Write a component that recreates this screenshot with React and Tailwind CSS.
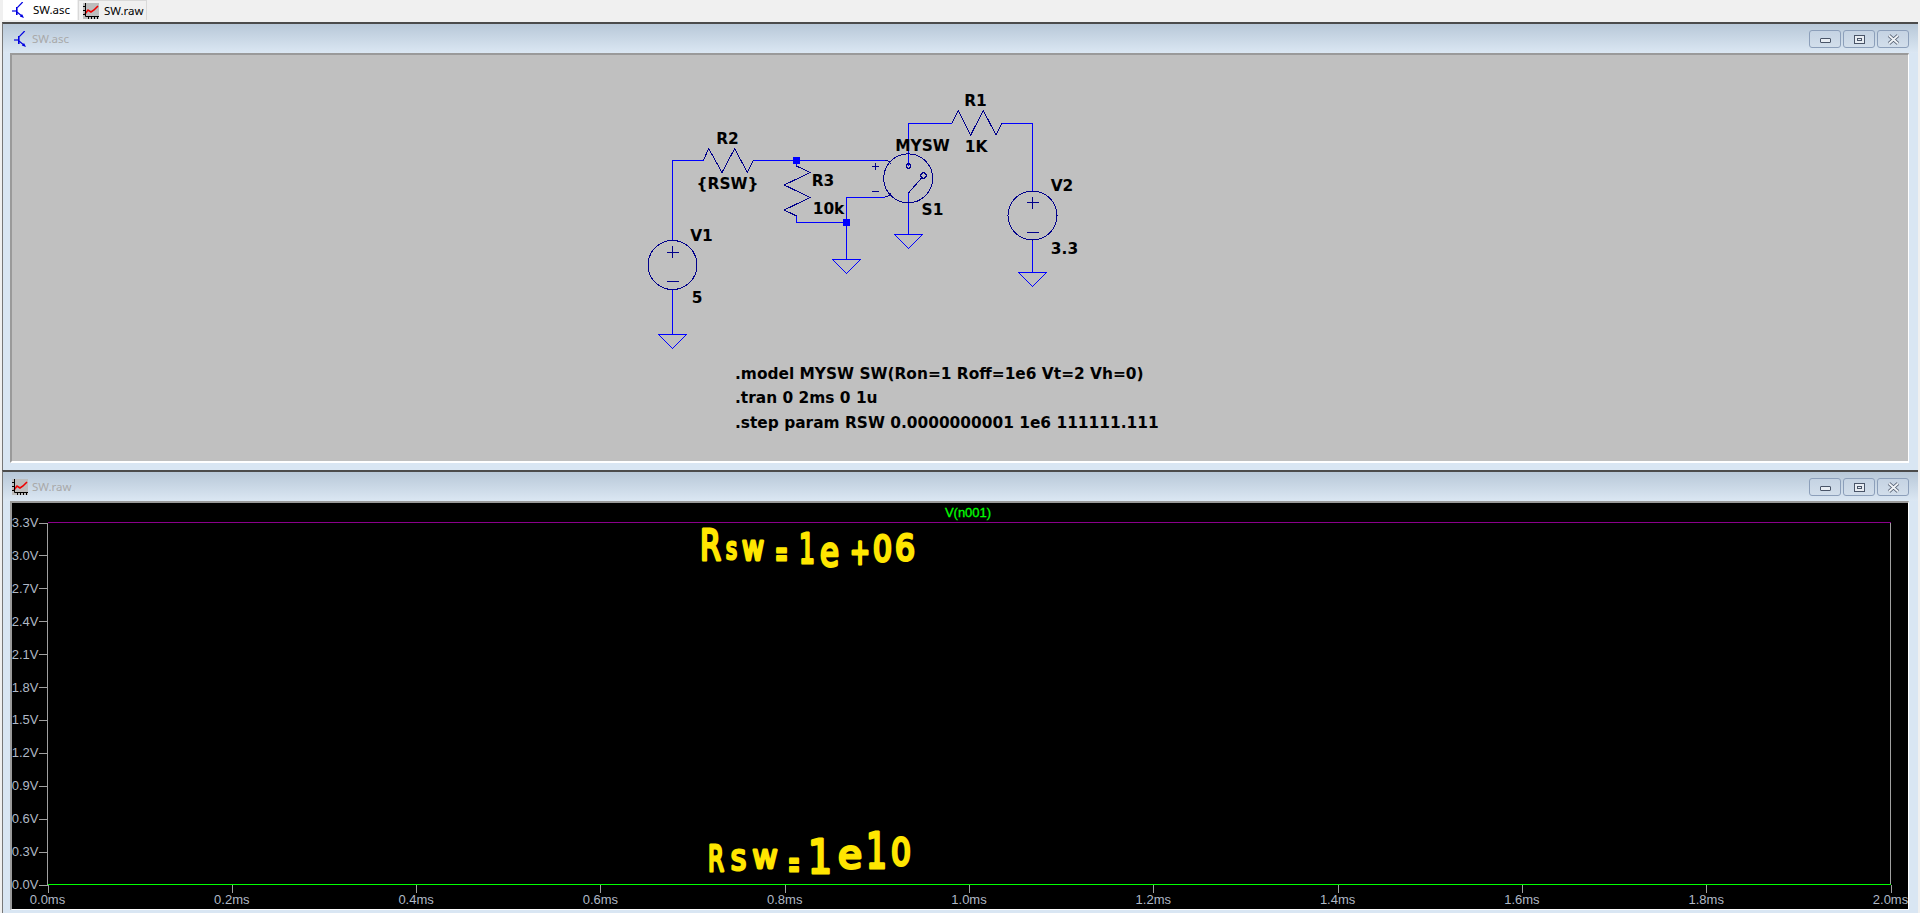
import React from "react";

const schem = "#0000ff";
const symbol = "#00008b";

function AscIcon({ className = "" }) {
  return (
    <svg width="13" height="16" viewBox="0 0 13 16" className={`shrink-0 ${className}`}>
      <g stroke="#0000e0" fill="none">
        <path d="M0 9H4.5" strokeWidth="1.2" />
        <path d="M4.8 5V13" strokeWidth="1.6" />
        <path d="M5.3 5.7L10.7 0" strokeWidth="1.2" />
        <path d="M5 10L10.7 14.7" strokeWidth="1.2" />
      </g>
      <path d="M12 16L7.8 14.6L10 12Z" fill="#0000e0" />
    </svg>
  );
}

function RawIcon() {
  return (
    <svg width="16" height="16" viewBox="0 0 16 16" className="shrink-0">
      <rect x="0" y="0" width="16" height="16" fill="#bdbdbd" />
      <path d="M2 11L5 7L8 9L11 7L15 3" stroke="#f00000" strokeWidth="1.6" fill="none" />
      <path d="M2.5 0V13.5H16" stroke="#000" strokeWidth="1" fill="none" />
      <path d="M0 3.5H2M0 7.5H2M0 11.5H2M5.5 14V16M8.5 14V16M11.5 14V16M14.5 14V16" stroke="#000" strokeWidth="1" />
    </svg>
  );
}

function WinButton({ children }) {
  return (
    <div className="w-[32px] h-[18px] flex items-center justify-center rounded-[3px] border border-[#8c9fba] bg-gradient-to-b from-[#c5d3e3] to-[#d2deeb]">
      {children}
    </div>
  );
}

function WinControls() {
  return (
    <div className="flex gap-[2px] ml-auto mt-[1px]">
      <WinButton>
        <div className="w-[11px] h-[5px] mt-[2px] bg-[#e8edf3] border border-[#4a5568] rounded-[1px]" />
      </WinButton>
      <WinButton>
        <div className="w-[11px] h-[9px] flex items-center justify-center bg-[#e8edf3] border border-[#4a5568]">
          <div className="w-[5px] h-[3px] border border-[#4a5568]" />
        </div>
      </WinButton>
      <WinButton>
        <svg width="13" height="11" viewBox="0 0 13 11">
          <path d="M2 1.5L11 9.5M11 1.5L2 9.5" stroke="#4a5568" strokeWidth="3.6" />
          <path d="M2 1.5L11 9.5M11 1.5L2 9.5" stroke="#eef2f6" strokeWidth="2" />
        </svg>
      </WinButton>
    </div>
  );
}

function Window({ title, icon, height, bottom, children }) {
  return (
    <div className={`${height} mx-[2px] flex flex-col border-t-2 border-l border-[#4b4b4b] border-l-[#777] bg-[#d9e6f3]`}>
      <div className="h-[29px] shrink-0 flex items-center pl-[9px] pr-[9px] bg-gradient-to-b from-[#b8c8d8] to-[#dbe7f3]">
        <div className="w-[20px] flex items-center">{icon}</div>
        <span className="text-[#a9a9a9] text-[11.5px] font-['Noto_Sans',sans-serif]">{title}</span>
        <WinControls />
      </div>
      <div className={`flex-1 min-h-0 pl-[7px] pr-[9px] ${bottom}`}>{children}</div>
    </div>
  );
}

function Ground({ x, y }) {
  return <path d={`M${x - 14} ${y}H${x + 14}L${x} ${y + 14}Z`} fill="none" stroke={schem} strokeWidth="1" />;
}

function Source({ x, y }) {
  return (
    <g stroke={symbol} fill="none" strokeWidth="1">
      <circle cx={x} cy={y} r="24.5" />
      <path d={`M${x - 6} ${y - 13}H${x + 6}M${x} ${y - 19}V${y - 7}M${x - 6} ${y + 16.5}H${x + 6}`} />
    </g>
  );
}

const labels = [
  ["R1", 975.5, 105.5],
  ["1K", 976, 152],
  ["R2", 727.5, 144],
  ["{RSW}", 727.5, 189],
  ["R3", 823, 185.5],
  ["10k", 828.5, 214],
  ["MYSW", 922.5, 150.5],
  ["S1", 932.5, 215],
  ["V2", 1062, 191],
  ["3.3", 1064.5, 253.5],
  ["V1", 701.5, 240.5],
  ["5", 697, 303],
];

function Schematic() {
  return (
    <svg viewBox="12 55 1896 406" className="w-full h-full block" shapeRendering="crispEdges">
      <g stroke={schem} fill="none" strokeWidth="1">
        {/* wires */}
        <path d="M672.5 240V160H703.5M753.5 160H885" />
        <path d="M796.5 160V166M796.5 216V222H846.5M846.5 197V260M846.5 197H885" />
        <path d="M908.5 123V166M908.5 123H952M1002 123H1032.5V191.5" />
        <path d="M908.5 193V235M1032.5 240V272M672.5 289V334" />
      </g>
      <g stroke={symbol} fill="none" strokeWidth="1">
        {/* resistors */}
        <path d="M703.5 160L708.7 148.5L722 172.5L734.7 148.5L747.3 172.5L753.5 160" />
        <path d="M952 123L958.3 110.5L970.7 135L983.3 110.5L996 135L1002 123" />
        <path d="M796.5 166L810 172.5L784.3 185L810 197.5L784.3 210L796.5 216" />
        {/* switch */}
        <path d="M885 160Q890 161 890.5 164M885 197Q890 196 890.5 193" />
        <circle cx="908.2" cy="178.3" r="24.5" />
        <circle cx="908.5" cy="166" r="2.2" />
        <circle cx="923.5" cy="175.5" r="2.8" />
        <path d="M921.5 178L908.5 193" />
        <path d="M871.5 166.5H878.5M875 163V170M871.5 191.5H878.5" />
        <Source x={672.5} y={265} />
        <Source x={1032.5} y={215.5} />
        <Ground x={672.5} y={334.5} />
        <Ground x={846.5} y={259.5} />
        <Ground x={908.5} y={234.5} />
        <Ground x={1032.5} y={272.5} />
      </g>
      <rect x="793" y="157" width="7" height="7" fill={schem} />
      <rect x="843" y="219" width="7" height="7" fill={schem} />
      <g shapeRendering="auto" fontFamily="'DejaVu Sans', sans-serif" fontWeight="700" fontSize="15.4px" fill="#000" textAnchor="middle">
        {labels.map(([t, x, y]) => (
          <text key={t} x={x} y={y}>{t}</text>
        ))}
      </g>
      <g shapeRendering="auto" fontFamily="'DejaVu Sans', sans-serif" fontWeight="700" fontSize="15.4px" fill="#000">
        <text x="735" y="378.5">.model MYSW SW(Ron=1 Roff=1e6 Vt=2 Vh=0)</text>
        <text x="735" y="403">.tran 0 2ms 0 1u</text>
        <text x="735" y="427.5">.step param RSW 0.0000000001 1e6 111111.111</text>
      </g>
    </svg>
  );
}

// hand written notes: [glyph, left, width, baseline, size]
const noteTop = [
  ["R", 700, 21, 560, 42],
  ["s", 726, 11, 559, 30],
  ["w", 742, 22, 560, 33],
  ["=", 775, 13, 567, 40],
  ["1", 799, 16, 563, 41],
  ["e", 820, 19, 566, 41],
  ["+", 850, 20, 564, 35],
  ["0", 873, 19, 561, 35],
  ["6", 895, 20, 560, 36],
];

const noteBottom = [
  ["R", 708, 16, 871, 35],
  ["S", 731, 15, 870, 27],
  ["W", 753, 24, 868, 25],
  ["=", 788, 12, 878, 42],
  ["1", 808, 24, 873, 47],
  ["e", 838, 24, 868, 39],
  ["1", 866, 21, 868, 49],
  ["0", 891, 20, 865, 38],
];

function Note({ glyphs }) {
  return (
    <g fontFamily="'DejaVu Sans', sans-serif" fill="#ffe600" stroke="#ffe600" strokeWidth="3" strokeLinejoin="round" strokeLinecap="round">
      {glyphs.map(([g, x, w, y, size], i) => (
        <text key={i} x={x} y={y} fontSize={size} textLength={w} lengthAdjust="spacingAndGlyphs">{g}</text>
      ))}
    </g>
  );
}

const yTicks = ["3.3V", "3.0V", "2.7V", "2.4V", "2.1V", "1.8V", "1.5V", "1.2V", "0.9V", "0.6V", "0.3V", "0.0V"];
const xTicks = ["0.0ms", "0.2ms", "0.4ms", "0.6ms", "0.8ms", "1.0ms", "1.2ms", "1.4ms", "1.6ms", "1.8ms", "2.0ms"];

function Plot() {
  const left = 47.5;
  const right = 1890.5;
  const top = 522.5;
  const bottom = 884.5;
  return (
    <svg viewBox="12 503 1896 406" className="w-full h-full block">
      <g stroke="#a0a0a0" strokeWidth="1" shapeRendering="crispEdges">
        <path d={`M${left} ${top}V${bottom}M${right} ${top}V${bottom}`} />
        {yTicks.map((t, i) => {
          const y = Math.round(top + (i * (bottom - top)) / 11) + 0.5;
          return <path key={t} d={`M39 ${y}H${left}`} />;
        })}
        {xTicks.map((t, i) => {
          const x = Math.round(left + (i * (right - left)) / 10) + 0.5;
          return <path key={t} d={`M${x} ${bottom}V${bottom + 8}`} />;
        })}
      </g>
      <path d={`M${left} ${top}H${right}`} stroke="#8b008b" shapeRendering="crispEdges" />
      <path d={`M${left} ${bottom}H${right}`} stroke="#00ff00" shapeRendering="crispEdges" />
      <g fontFamily="'Liberation Sans', sans-serif" fontSize="13px" fill="#b0b9c6">
        {yTicks.map((t, i) => (
          <text key={t} x="38.5" y={top + (i * (bottom - top)) / 11 + 4.5} textAnchor="end">{t}</text>
        ))}
        {xTicks.map((t, i) => (
          <text key={t} x={left + (i * (right - left)) / 10} y="904" textAnchor="middle">{t}</text>
        ))}
      </g>
      <text x="968" y="516.5" textAnchor="middle" fontFamily="'Liberation Sans', sans-serif" fontSize="13px" fill="#00ff00" stroke="#00ff00" strokeWidth="0.3">V(n001)</text>
      <Note glyphs={noteTop} />
      <Note glyphs={noteBottom} />
    </svg>
  );
}

export default function App() {
  return (
    <div className="w-[1920px] h-[913px] overflow-hidden flex flex-col bg-[#f0f0f0]">
      <div className="h-[22px] shrink-0 flex items-start pl-[3px] text-[#000] text-[11.5px] font-['Noto_Sans',sans-serif]">
        <div className="w-[74px] h-[20px] flex items-center pl-[9px] bg-white">
          <AscIcon />
          <span className="ml-[8px]">SW.asc</span>
        </div>
        <div className="w-[69px] h-[20px] ml-[1px] flex items-center pl-[4px] border-t border-x border-[#d9d9d9]">
          <RawIcon />
          <span className="ml-[5px]">SW.raw</span>
        </div>
      </div>

      <Window title="SW.asc" icon={<AscIcon className="ml-[2px]" />} height="h-[448px]" bottom="pb-[7px]">
        <div className="h-full border-t-2 border-l-2 border-[#9a9a9a] border-b-2 border-b-white border-r border-r-white bg-[#c0c0c0] overflow-hidden">
          <Schematic />
        </div>
      </Window>

      <Window title="SW.raw" icon={<RawIcon />} height="h-[443px]" bottom="pb-[3px]">
        <div className="h-full border-t-2 border-l-2 border-[#9a9a9a] border-b border-b-white border-r border-r-white bg-black overflow-hidden">
          <Plot />
        </div>
      </Window>
    </div>
  );
}
